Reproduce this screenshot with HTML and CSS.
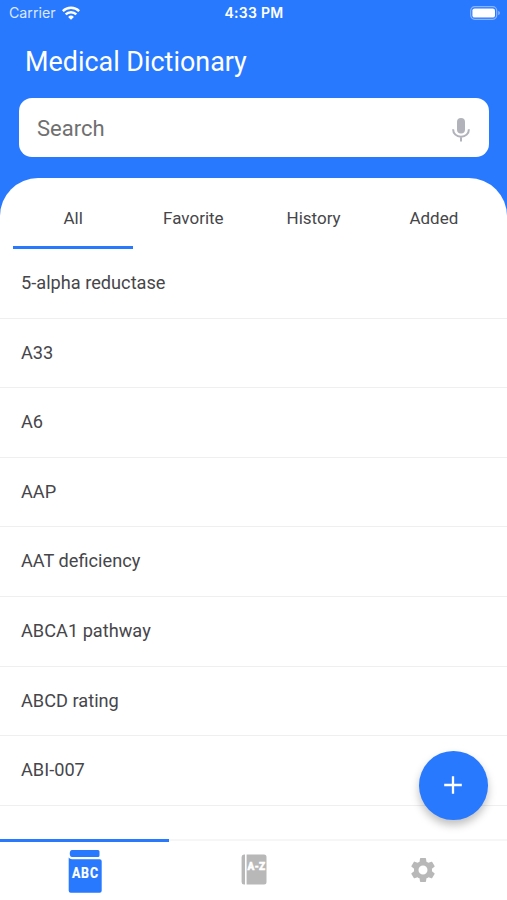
FILE: index.html
```html
<!DOCTYPE html>
<html lang="en">
<head>
<meta charset="utf-8">
<title>Medical Dictionary</title>
<link rel="stylesheet" href="styles.css">
</head>
<body>
<div class="app">
  <header class="header">
    <div class="status">
      <div class="carrier"><span>Carrier</span>
        <svg class="wifi" width="18" height="14" viewBox="0 0 18 14" fill="none" stroke="#fff" stroke-width="2.4"><path d="M.8 5.1a11.6 11.6 0 0 1 16.4 0M3.7 8.4a7.500 7.500 0 0 1 10.600 0"/><path d="M9 13.800 6.100 10.900a4.100 4.100 0 0 1 5.800 0z" fill="#fff" stroke="none"/></svg>
      </div>
      <div class="clock">4:33 PM</div>
      <svg class="battery" width="31" height="14" viewBox="0 0 31 14"><rect x=".7" y=".7" width="26" height="12.6" rx="4" fill="none" stroke="#8bb4ff" stroke-width="1.2"/><rect x="2.4" y="2.4" width="22.6" height="9.2" rx="2.2" fill="#fff"/><path d="M28.2 4.8v4.4q1.8-.8 1.8-2.2t-1.8-2.2z" fill="#8bb4ff"/></svg>
    </div>
    <h1 class="title">Medical Dictionary</h1>
    <div class="search"><span>Search</span>
      <svg class="mic" width="18" height="24" viewBox="0 0 18 24"><rect x="5" y="0" width="8" height="15.400" rx="4" fill="#b2b2bb"/><path d="M1.100 11.200c0 4.500 3.400 7.500 7.900 7.500s7.900-3 7.900-7.500M9 18.700v4.800" fill="none" stroke="#b2b2bb" stroke-width="2"/></svg>
    </div>
  </header>
  <main class="sheet">
    <nav class="tabs">
      <div class="tab active">All</div><div class="tab">Favorite</div><div class="tab">History</div><div class="tab">Added</div>
    </nav>
    <ul class="list">
      <li>5-alpha reductase</li><li>A33</li><li>A6</li><li>AAP</li><li>AAT deficiency</li><li>ABCA1 pathway</li><li>ABCD rating</li><li>ABI-007</li>
    </ul>
    <div class="fab"><svg width="18" height="18" viewBox="0 0 18 18"><path d="M9 .2v17.6M.2 9h17.6" stroke="#fff" stroke-width="2.3"/></svg></div>
  </main>
  <footer class="bottom">
    <div class="item current"><svg width="34" height="44" viewBox="0 0 34 44"><path d="M4 0h26q1.500 0 1.500 1.500v4q0 1.500-1.500 1.500H4Q1.800 7 1.800 3.500T4 0z" fill="#2979ff"/><path d="M.7 7.500Q1.800 9.200 4 9.200h27.700q2 0 2 2v29.600q0 2-2 2H2.700q-2 0-2-2z" fill="#2979ff"/><text x="17.400" y="28.300" class="abc" text-anchor="middle" textLength="27" lengthAdjust="spacingAndGlyphs">ABC</text></svg></div>
    <div class="item"><svg width="26" height="32" viewBox="0 0 26 32"><path d="M3 .5h1v30H3Q.6 30.500.6 28V3Q.6.5 3 .5zM5.600.5H23q2.500 0 2.500 2.500v25q0 2.500-2.500 2.500H5.600z" fill="#b8b8b8"/><text x="15.300" y="15.500" class="az" text-anchor="middle">A-Z</text></svg></div>
    <div class="item"><svg width="30" height="30" viewBox="0 0 24 24" fill="#b8b8b8"><path d="M19.140 12.940c.04-.3.060-.610.060-.940 0-.320-.020-.640-.070-.940l2.030-1.580c.180-.140.230-.410.120-.610l-1.920-3.320c-.120-.220-.370-.290-.590-.220l-2.390.960c-.5-.380-1.030-.7-1.620-.940l-.360-2.540c-.040-.240-.240-.410-.480-.410h-3.840c-.240 0-.430.170-.470.410l-.360 2.540c-.590.240-1.130.570-1.620.940l-2.390-.960c-.220-.080-.470 0-.590.220L2.740 8.870c-.120.210-.080.470.120.610l2.030 1.580c-.050.300-.09.630-.09.940s.020.640.070.940l-2.030 1.580c-.180.140-.230.410-.120.610l1.920 3.320c.120.220.370.290.590.220l2.390-.960c.5.380 1.030.7 1.620.940l.360 2.540c.050.240.240.410.480.410h3.840c.240 0 .440-.170.470-.410l.360-2.540c.590-.240 1.130-.560 1.620-.940l2.390.960c.220.080.470 0 .59-.220l1.920-3.320c.120-.220.070-.470-.120-.610zM12 15.600A3.600 3.600 0 1 1 12 8.400a3.600 3.600 0 0 1 0 7.200z"/></svg></div>
  </footer>
</div>
</body>
</html>
```
FILE: styles.css
```css
* { box-sizing: border-box; }
body { margin: 0; }
.app {
  width: 507px;
  height: 900px;
  display: flex;
  flex-direction: column;
  overflow: hidden;
  background: #2979ff;
  color: #46464a;
  font-family: Roboto, sans-serif;
}
.header { height: 178px; flex: none; }
.status {
  height: 27px;
  padding: 0 6px 0 9px;
  display: grid;
  grid-template-columns: 1fr auto 1fr;
  align-items: center;
  color: #fff;
  font: 14.2px/26px Inter, sans-serif;
}
.carrier { display: flex; align-items: center; gap: 6px; color: #dce8ff; }
.carrier span { margin-top: -2px; }
.wifi { margin-top: -2px; }
.clock { font-weight: 600; font-size: 14px; letter-spacing: .3px; margin: -1px 0 0 -2px; }
.battery { justify-self: end; margin-top: -1px; }
.title {
  margin: 18px 0 0 25px;
  color: #fff;
  font-size: 26.9px;
  line-height: 34px;
  font-weight: 400;
}
.search {
  height: 59px;
  margin: 19px 18px 0 19px;
  padding: 0 19px 0 18px;
  display: flex;
  align-items: center;
  justify-content: space-between;
  border-radius: 13px;
  background: #fff;
  color: #707070;
  font-size: 22px;
}
.search span { padding-top: 2px; }
.mic { margin-top: 4px; }
.sheet {
  position: relative;
  height: 661px;
  flex: none;
  border-radius: 38px 38px 0 0;
  background: #fff;
}
.tabs {
  height: 71px;
  padding: 0 13px;
  display: grid;
  grid-template-columns: repeat(4, 1fr);
  font-size: 17px;
}
.tab {
  padding-top: 29px;
  line-height: 22px;
  text-align: center;
  border-bottom: 3px solid transparent;
}
.tab.active { border-color: #2979ff; }
.list { margin: 0; padding: 0; list-style: none; font-size: 18.2px; }
.list li {
  height: 69.6px;
  padding: 0 21px;
  line-height: 68.2px;
  border-bottom: 1px solid #efefef;
}
.fab {
  position: absolute;
  right: 19.5px;
  top: 573px;
  width: 68.5px;
  height: 68.5px;
  display: grid;
  place-items: center;
  border-radius: 50%;
  background: #2979ff;
  box-shadow: 0 5px 8px rgba(0, 0, 0, .25);
}
.bottom {
  height: 61px;
  display: grid;
  grid-template-columns: repeat(3, 1fr);
  background: #fff;
}
.item {
  display: grid;
  place-items: center;
  padding-bottom: 1px;
  border-top: 2px solid #f6f6f6;
}
.item.current { padding: 1px 0 0; border-top: 3px solid #2979ff; }
.abc { font: 700 14px Roboto, sans-serif; letter-spacing: 1px; fill: #fff; stroke: #fff; stroke-width: .2px; }
.az { font: 900 10px Roboto, sans-serif; fill: #fff; stroke: #fff; stroke-width: .4px; }
```
